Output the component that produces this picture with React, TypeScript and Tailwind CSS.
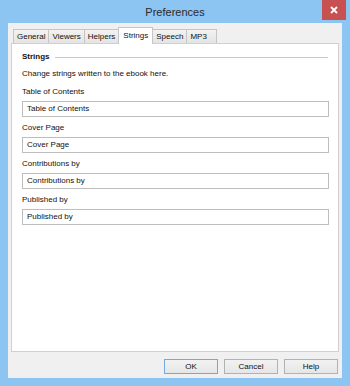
import React from 'react';

const tabs = ['General', 'Viewers', 'Helpers', 'Strings', 'Speech', 'MP3'];
const fields = ['Table of Contents', 'Cover Page', 'Contributions by', 'Published by'];

const font = { fontFamily: '"Liberation Sans", Arial, sans-serif' };

const App: React.FC = () => {
  return (
    <div className="w-[350px] h-[386px] bg-[#8cc4f2] flex flex-col text-[#111]" style={font}>
      {/* title bar */}
      <div className="relative h-[23px] flex items-center justify-center shrink-0">
        <span className="text-[11px] text-[#2b2b2b] pt-[1px]">Preferences</span>
        <button className="absolute top-0 right-[4px] w-[24px] h-[20px] bg-[#c75050] flex items-center justify-center">
          <svg width="8" height="8" viewBox="0 0 8 8">
            <path d="M1 1 L7 7 M7 1 L1 7" stroke="#fff" strokeWidth="1.8" />
          </svg>
        </button>
      </div>

      {/* client area */}
      <div className="mx-[8px] mb-[8px] flex-1 bg-[#f0f0f0] flex flex-col px-[3px] pt-[4px] pb-[4px]">
        {/* tabs */}
        <div className="flex items-end ml-[2px] h-[16px] relative z-10">
          {tabs.map((t) => {
            const active = t === 'Strings';
            return (
              <div
                key={t}
                className={
                  active
                    ? 'h-[17px] -mb-[1px] -ml-px bg-white border border-b-0 border-[#c5c5c5] px-[4px] flex items-center text-[8px]'
                    : 'h-[14px] bg-gradient-to-b from-[#f2f2f2] to-[#e4e4e4] border border-b-0 border-[#c5c5c5] -ml-px first:ml-0 px-[3px] last:pr-[9px] flex items-center text-[8px]'
                }
              >
                {t}
              </div>
            );
          })}
        </div>

        {/* panel */}
        <div className="flex-1 bg-white border border-[#d0d0d0] pl-[10px] pr-[9px] pt-[8px] flex flex-col">
          <div className="flex items-center gap-[5px] h-[10px]">
            <span className="text-[8px] font-bold">Strings</span>
            <div className="flex-1 h-px bg-[#c8c8c8] mr-[1px]" />
          </div>
          <div className="text-[8px] mt-[7px] h-[10px] leading-[10px]">Change strings written to the ebook here.</div>
          <div className="flex flex-col gap-[3px] mt-[5px]">
            {fields.map((f) => (
              <div key={f} className="flex flex-col">
                <div className="text-[8px] h-[10px] leading-[10px] mt-[3px]">{f}</div>
                <div className="mt-[4px] h-[16px] border border-[#bdbdbd] flex items-center px-[4px] text-[8px]">
                  {f}
                </div>
              </div>
            ))}
          </div>
        </div>

        {/* buttons */}
        <div className="flex justify-end gap-[6px] mt-[7px] pr-[1px]">
          <button className="w-[54px] h-[15px] border border-[#6fa9e0] bg-gradient-to-b from-[#f2f2f2] to-[#e6e6e6] text-[8px] flex items-center justify-center">
            OK
          </button>
          <button className="w-[54px] h-[15px] border border-[#b2b2b2] bg-gradient-to-b from-[#f2f2f2] to-[#e6e6e6] text-[8px] flex items-center justify-center">
            Cancel
          </button>
          <button className="w-[54px] h-[15px] border border-[#b2b2b2] bg-gradient-to-b from-[#f2f2f2] to-[#e6e6e6] text-[8px] flex items-center justify-center">
            Help
          </button>
        </div>
      </div>
    </div>
  );
};

export default App;
